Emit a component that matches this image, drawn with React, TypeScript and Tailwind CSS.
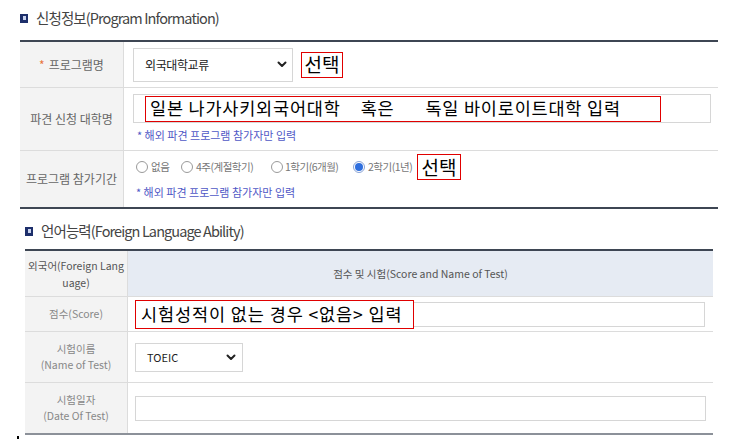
import React from "react";

const KR = { fontFamily: '"Noto Sans CJK KR", "Noto Sans", sans-serif' };

function Chevron() {
  return (
    <svg width="10" height="7" viewBox="0 0 10 7" className="shrink-0">
      <path d="M1.5 1.5 L5 5 L8.5 1.5" fill="none" stroke="#222" strokeWidth="2" strokeLinecap="round" strokeLinejoin="round" />
    </svg>
  );
}

function Radio({ checked }: { checked?: boolean }) {
  return checked ? (
    <span className="inline-flex h-[12px] w-[12px] items-center justify-center rounded-full border border-[#8aa4d6] bg-white">
      <span className="h-[8px] w-[8px] rounded-full bg-[#2f6fde]" />
    </span>
  ) : (
    <span className="inline-block h-[12px] w-[12px] rounded-full border border-[#9a9a9a] bg-white" />
  );
}

function TitleIcon() {
  return (
    <span className="inline-flex h-[9px] w-[8px] items-center justify-center bg-[#1d2f6b]">
      <span className="h-[4px] w-[3px] bg-[#c9d3ee]" />
    </span>
  );
}

export default function App() {
  return (
    <div className="relative h-[441px] w-[742px] bg-white text-[#555]" style={KR}>
      {/* Section 1 */}
      <div className="ml-[20px] w-[698px]">
        <div className="flex h-[40px] items-center gap-[8px] pb-[4px]">
          <TitleIcon />
          <span className="text-[14.5px] tracking-[-0.9px] text-[#444]">신청정보(Program Information)</span>
        </div>
        <div className="border-y-2 border-[#3e4653]">
          {/* row 1 */}
          <div className="flex h-[46px] border-b border-[#dcdcdc]">
            <div className="flex w-[104px] shrink-0 items-center justify-center border-r border-[#dcdcdc] bg-[#f3f3f3] text-[12px] text-[#666]">
              <span className="mr-[4px] text-[#e8743b]">*</span>프로그램명
            </div>
            <div className="flex items-center pl-[9px]">
              <div className="flex h-[34px] w-[160px] items-center justify-between border border-[#d6d6d6] bg-white pl-[11px] pr-[5px] text-[12px] tracking-[-0.4px] text-[#222]">
                <span>외국대학교류</span>
                <Chevron />
              </div>
              <div className="ml-[8px] flex h-[26px] w-[42px] items-center justify-center border border-[#e00000] text-[19px] text-black">
                선택
              </div>
            </div>
          </div>
          {/* row 2 */}
          <div className="flex h-[63px] border-b border-[#dcdcdc]">
            <div className="flex w-[104px] shrink-0 items-center justify-center border-r border-[#dcdcdc] bg-[#f3f3f3] text-[12px] text-[#666]">
              파견 신청 대학명
            </div>
            <div className="flex flex-col pl-[9px] pt-[6px]">
              <div className="flex h-[29px] w-[578px] items-center border border-[#d6d6d6] bg-white pl-[11px]">
                <div className="flex h-[26px] w-[516px] items-center whitespace-pre border border-[#e00000] pl-[4px] text-[17.5px] tracking-[0.8px] text-black">
                  <span>일본 나가사키외국어대학</span>
                  <span className="ml-[20px]">혹은</span>
                  <span className="ml-[31px]">독일 바이로이트대학 입력</span>
                </div>
              </div>
              <div className="mt-[4px] pl-[4px] text-[11px] text-[#5058c6]">* 해외 파견 프로그램 참가자만 입력</div>
            </div>
          </div>
          {/* row 3 */}
          <div className="flex h-[56px]">
            <div className="flex w-[104px] shrink-0 items-center justify-center border-r border-[#dcdcdc] bg-[#f3f3f3] text-[12px] text-[#666]">
              프로그램 참가기간
            </div>
            <div className="flex flex-col pl-[12px] pt-[3px]">
              <div className="flex h-[26px] items-center text-[10.5px] tracking-[-0.5px] text-[#777]">
                <Radio />
                <span className="ml-[3px] w-[30px]">없음</span>
                <Radio />
                <span className="ml-[3px] w-[75px]">4주(계절학기)</span>
                <Radio />
                <span className="ml-[2px] w-[68px]">1학기(6개월)</span>
                <Radio checked />
                <span className="ml-[3px] w-[49px]">2학기(1년)</span>
                <div className="flex h-[26px] w-[44px] items-center justify-center border border-[#e00000] text-[19px] tracking-normal text-black">
                  선택
                </div>
              </div>
              <div className="mt-[4px] text-[11px] text-[#5058c6]">* 해외 파견 프로그램 참가자만 입력</div>
            </div>
          </div>
        </div>
      </div>

      {/* Section 2 */}
      <div className="ml-[25px] w-[688px]">
        <div className="flex h-[40px] items-center gap-[8px] pt-[4px]">
          <TitleIcon />
          <span className="text-[14.5px] tracking-[-0.9px] text-[#444]">언어능력(Foreign Language Ability)</span>
        </div>
        <div className="border-t-2 border-b-2 border-t-[#3e4653] border-b-[#8c9199]">
          {/* header */}
          <div className="flex h-[46px] border-b border-[#dcdcdc]">
            <div className="flex w-[103px] shrink-0 flex-col items-center justify-center border-r border-[#dcdcdc] bg-[#f3f3f3] text-[10.5px] leading-[17px] text-[#555]">
              <span>외국어(Foreign Lang</span>
              <span>uage)</span>
            </div>
            <div className="flex flex-1 items-center justify-center bg-[#e6ebf3] text-[10.5px] text-[#555]">
              점수 및 시험(Score and Name of Test)
            </div>
          </div>
          {/* score */}
          <div className="flex h-[35px] border-b border-[#dcdcdc]">
            <div className="flex w-[103px] shrink-0 items-center justify-center border-r border-[#dcdcdc] bg-[#f3f3f3] text-[10.5px] text-[#888]">
              점수(Score)
            </div>
            <div className="relative flex flex-1 items-center pl-[7px]">
              <div className="h-[25px] w-[570px] border border-[#d6d6d6] bg-white" />
              <div className="absolute left-[7px] top-[3px] flex h-[29px] w-[279px] items-center border border-[#e00000] bg-white pl-[5px] text-[17.5px] tracking-[0.9px] text-black">
                시험성적이 없는 경우 &lt;없음&gt; 입력
              </div>
            </div>
          </div>
          {/* name */}
          <div className="flex h-[51px] border-b border-[#dcdcdc]">
            <div className="flex w-[103px] shrink-0 flex-col items-center justify-center border-r border-[#dcdcdc] bg-[#f3f3f3] text-[10.5px] leading-[16px] text-[#888]">
              <span>시험이름</span>
              <span>(Name of Test)</span>
            </div>
            <div className="flex flex-1 items-center pl-[7px]">
              <div className="flex h-[29px] w-[108px] items-center justify-between border border-[#d6d6d6] bg-white pl-[11px] pr-[6px] text-[11px] text-[#222]">
                <span>TOEIC</span>
                <Chevron />
              </div>
            </div>
          </div>
          {/* date */}
          <div className="flex h-[50px]">
            <div className="flex w-[103px] shrink-0 flex-col items-center justify-center border-r border-[#dcdcdc] bg-[#f3f3f3] text-[10.5px] leading-[16px] text-[#888]">
              <span>시험일자</span>
              <span>(Date Of Test)</span>
            </div>
            <div className="flex flex-1 items-center pl-[7px]">
              <div className="h-[25px] w-[571px] border border-[#d6d6d6] bg-white" />
            </div>
          </div>
        </div>
      </div>
      <span className="absolute left-[17px] top-[436px] h-[3px] w-[2px] bg-black" />
    </div>
  );
}
